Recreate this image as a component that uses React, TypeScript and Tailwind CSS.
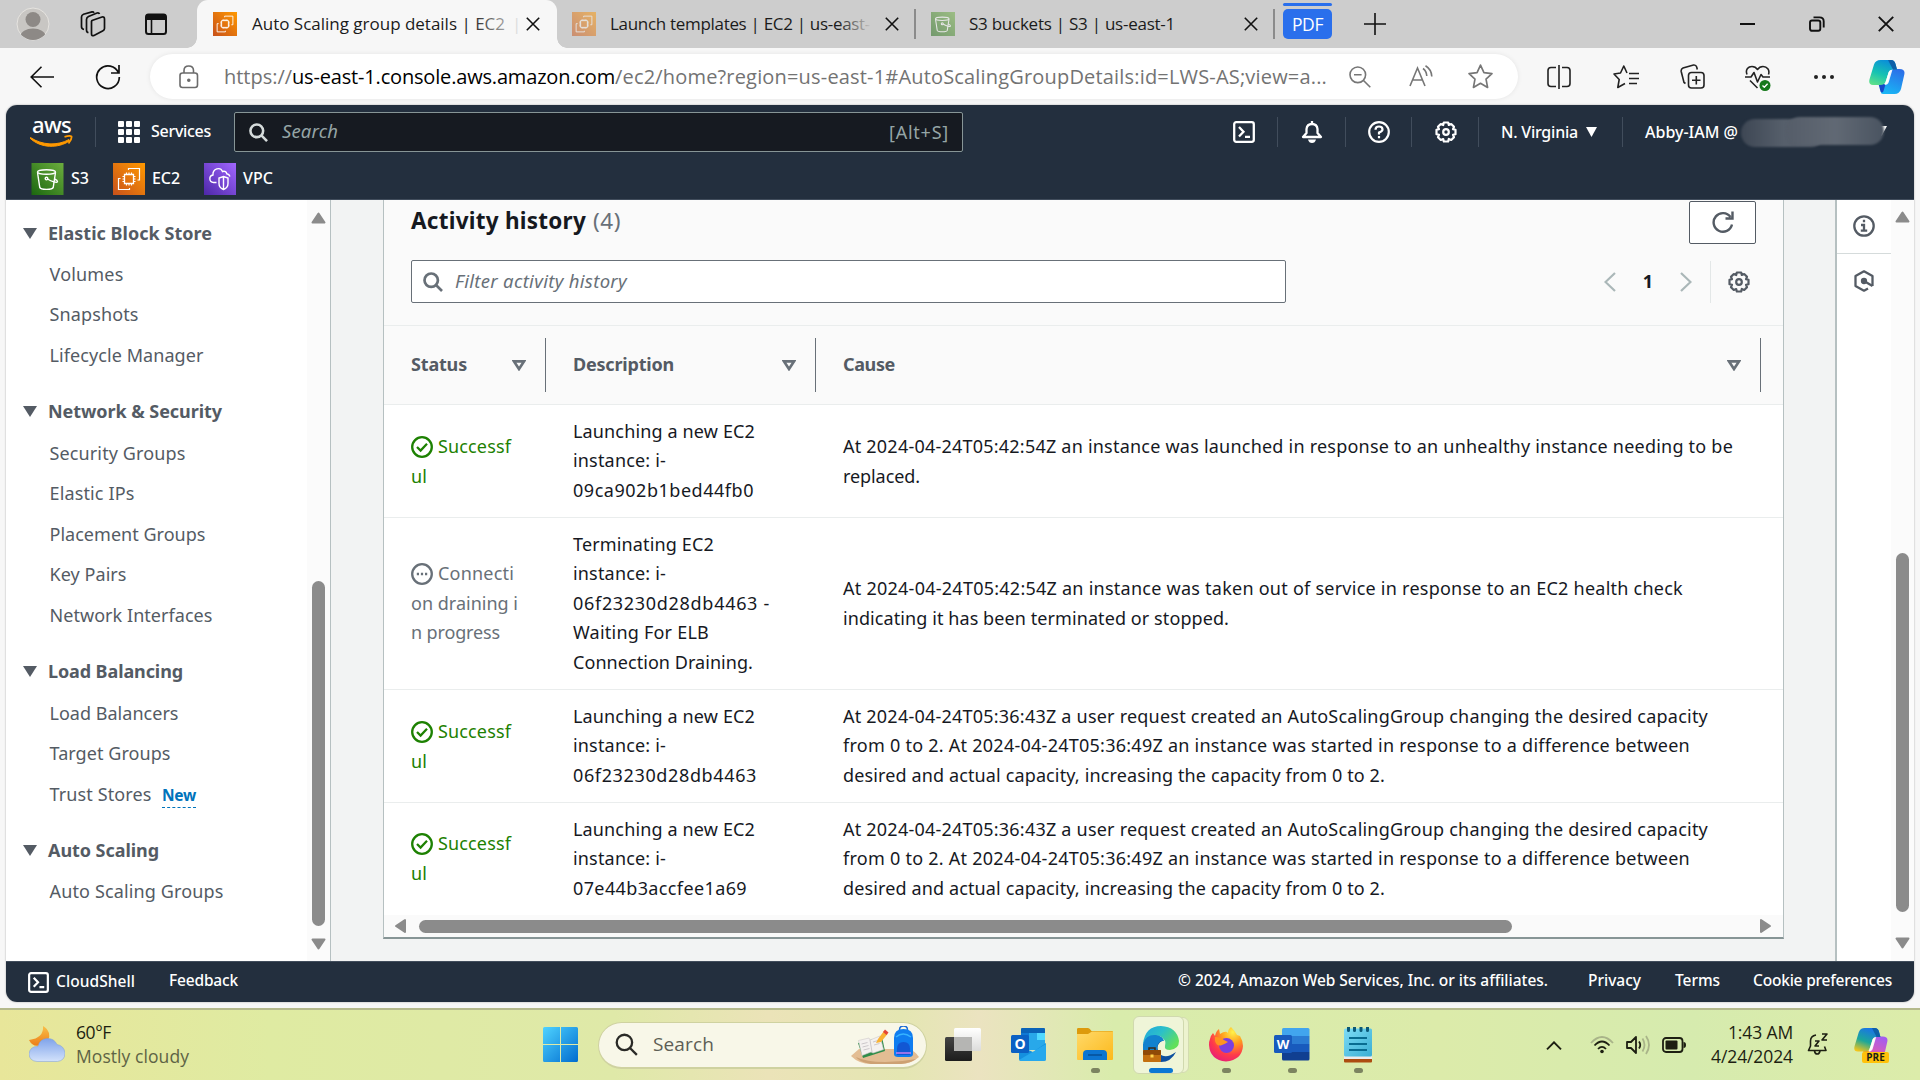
import { useLayoutEffect, useRef, type ReactNode } from "react";

/* Single line of text whose tracking is adjusted so it fills the box given by its classes. */
function Fit({ className = "", children }: { className?: string; children: ReactNode }) {
  const box = useRef<HTMLSpanElement>(null);
  const inner = useRef<HTMLSpanElement>(null);
  useLayoutEffect(() => {
    const b = box.current;
    const i = inner.current;
    if (!b || !i) return;
    i.style.letterSpacing = "0px";
    const n = (i.textContent || "").length;
    i.style.letterSpacing = `${(b.getBoundingClientRect().width - i.getBoundingClientRect().width) / n}px`;
  }, []);
  return (
    <span ref={box} className={`block shrink-0 whitespace-nowrap ${className}`}>
      <span ref={inner}>{children}</span>
    </span>
  );
}

function Ec2Icon({ className = "", id }: { className?: string; id: string }) {
  return (
    <svg viewBox="0 0 32 32" className={className}>
      <defs>
        <linearGradient id={id} x1="0" y1="1" x2="1" y2="0">
          <stop offset="0" stopColor="#c8511b" />
          <stop offset="1" stopColor="#ff9900" />
        </linearGradient>
      </defs>
      <rect width="32" height="32" fill={`url(#${id})`} />
      <g fill="none" stroke="#fff" strokeWidth="1.2">
        <path d="M11.500 20.500V11.500H20.500V20.500Z" strokeWidth="1.300" />
        <path d="M13.500 11.500V9.500M16 11.500V9.500M18.500 11.500V9.500M13.500 22.500V20.500M16 22.500V20.500M18.500 22.500V20.500M11.500 13.500H9.500M11.500 16H9.500M11.500 18.500H9.500M22.500 13.500H20.500M22.500 16H20.500M22.500 18.500H20.500" />
        <path d="M15.500 7V5.500H26.500V17H24.500" />
        <path d="M7.500 15.500H5.500V26.500H16.500V25" />
      </g>
    </svg>
  );
}

function S3Icon({ className = "", id }: { className?: string; id: string }) {
  return (
    <svg viewBox="0 0 32 32" className={className}>
      <defs>
        <linearGradient id={id} x1="0" y1="1" x2="1" y2="0">
          <stop offset="0" stopColor="#1b660f" />
          <stop offset="1" stopColor="#6cae3e" />
        </linearGradient>
      </defs>
      <rect width="32" height="32" fill={`url(#${id})`} />
      <g fill="none" stroke="#fff" strokeWidth="1.400">
        <ellipse cx="15" cy="9" rx="9" ry="2.200" />
        <path d="M6 9.500L8.300 24.500C9 27 21 27 21.700 24.500L24 9.500" />
        <circle cx="15" cy="15.600" r="1.300" />
        <path d="M16 16C20 18.500 26 20.500 26 18.600C26 17.600 24.500 16.700 23 16" />
      </g>
    </svg>
  );
}

function VpcIcon({ className = "" }: { className?: string }) {
  return (
    <svg viewBox="0 0 32 32" className={className}>
      <defs>
        <linearGradient id="vpc" x1="0" y1="1" x2="1" y2="0">
          <stop offset="0" stopColor="#4d27a8" />
          <stop offset="1" stopColor="#a166ff" />
        </linearGradient>
      </defs>
      <rect width="32" height="32" fill="url(#vpc)" />
      <g fill="none" stroke="#fff" strokeWidth="1.400">
        <path d="M12.500 19.500H9.500C5 19 4.500 13 9 12C8.500 5.500 16.500 3.500 18.500 8.500C21 7.500 22.500 9 22.800 10.800C24.500 11 25.500 12 26 13.500" />
        <path d="M19.500 13.500L24 15V20.500C24 23.500 22 25.500 19.500 26.500C17 25.500 15 23.500 15 20.500V15ZM19.500 13.500V26.500" />
      </g>
    </svg>
  );
}

function ShellIcon({ className = "" }: { className?: string }) {
  return (
    <svg viewBox="0 0 22 22" className={`shrink-0 ${className}`} fill="none" stroke="#fff" strokeWidth="2.300">
      <rect x="1.200" y="1.200" width="19.600" height="19.600" rx="2" />
      <path d="M6 6L10.500 10.800L6 15.500M12 15.800H17" />
    </svg>
  );
}

function Gear({ className = "" }: { className?: string }) {
  return (
    <svg viewBox="0 0 22 22" className={`shrink-0 ${className}`} fill="none" stroke="currentColor" strokeWidth="2.200" strokeLinejoin="round">
      <path d="M8.800 1.500H13.200L13.800 4L16.200 3L19 5.800L18 8.200L20.500 8.800V13.200L18 13.800L19 16.200L16.200 19L13.800 18L13.200 20.500H8.800L8.200 18L5.800 19L3 16.200L4 13.800L1.500 13.200V8.800L4 8.200L3 5.800L5.800 3L8.200 4Z" />
      <circle cx="11" cy="11" r="2.800" />
    </svg>
  );
}

function Magnifier({ className = "", w = 2.7 }: { className?: string; w?: number }) {
  return (
    <svg viewBox="0 0 20 20" className={`shrink-0 ${className}`} fill="none" stroke="currentColor" strokeWidth={w}>
      <circle cx="8.200" cy="8.200" r="6.700" />
      <path d="M13 13L19 19" />
    </svg>
  );
}

function Close({ className = "" }: { className?: string }) {
  return (
    <svg viewBox="0 0 14 14" className={`size-[14px] shrink-0 ${className}`} stroke="#111" strokeWidth="1.600">
      <path d="M.8.800L13.200 13.200M13.200.800L.800 13.200" />
    </svg>
  );
}

function Arrow({ dir, className = "" }: { dir: "up" | "down" | "left" | "right"; className?: string }) {
  const rot = { up: "", down: "rotate-180", left: "-rotate-90", right: "rotate-90" }[dir];
  return (
    <svg viewBox="0 0 15 12" className={`h-[12px] w-[15px] shrink-0 ${rot} ${className}`}>
      <path d="M7.500 1.500L13.500 10.500H1.500Z" fill="#8b8b8b" stroke="#8b8b8b" strokeWidth="2" strokeLinejoin="round" />
    </svg>
  );
}

function TabBar() {
  return (
    <div className="flex h-[48px] items-center bg-[#cdcdcd] text-[17px] text-[#1b1b1b]">
      <svg viewBox="0 0 34 34" className="ml-4 size-[34px]">
        <defs>
          <clipPath id="av"><circle cx="17" cy="17" r="16" /></clipPath>
        </defs>
        <circle cx="17" cy="17" r="16" fill="#c8c6c3" stroke="#e6e4e0" />
        <g fill="#8d8986" clipPath="url(#av)">
          <circle cx="17" cy="12.500" r="7.500" />
          <ellipse cx="17" cy="29" rx="12.500" ry="7.500" />
        </g>
      </svg>
      <svg viewBox="0 0 26 26" className="ml-[30px] size-[26px]" fill="none" stroke="#111" strokeWidth="1.700" strokeLinejoin="round">
        <path d="M12 9.500L22 6Q24.500 5.500 24.500 8V17.500Q24.500 19 23 19.700L14 24.500Q11.500 25.300 11.500 23V10.500Z" />
        <path d="M8.500 21.500Q6.500 21.500 6.500 19V8.500Q6.500 6.500 8.500 5.500L17 2Q19 1.500 19.500 3" />
        <path d="M4 18.500Q1.500 18 1.500 15.500V6Q1.500 4 3.500 3.200L12 .9Q13.500.7 14 1.800" />
      </svg>
      <svg viewBox="0 0 22 22" className="ml-[39px] size-[22px]">
        <rect x="1" y="1.500" width="20" height="19.500" rx="2.500" fill="none" stroke="#111" strokeWidth="2" />
        <path d="M1 3Q1 1 3 1H19Q21 1 21 3V7H1Z" fill="#111" />
        <path d="M6.500 6V21" stroke="#111" strokeWidth="1.600" />
      </svg>
      <div className="relative ml-[30px] flex h-full w-[360px] shrink-0 items-center rounded-t-[11px] bg-[#f7f7f7]">
        <span className="absolute bottom-0 -left-[10px] size-[10px] bg-[radial-gradient(circle_at_0_0,#cdcdcd_9.500px,#f7f7f7_10px)]" />
        <span className="absolute -right-[10px] bottom-0 size-[10px] bg-[radial-gradient(circle_at_100%_0,#cdcdcd_9.500px,#f7f7f7_10px)]" />
        <Ec2Icon id="e1" className="ml-[16px] size-[24px]" />
        <div className="relative ml-[15px] flex w-[262px]">
          <Fit className="w-[253px]">Auto Scaling group details | EC2</Fit>
          <span className="ml-[7px] text-[#ddd]">|</span>
          <span className="absolute right-[4px] h-full w-[40px] bg-gradient-to-r from-transparent to-[#f7f7f7]/70" />
        </div>
        <Close className="ml-[12px]" />
      </div>
      <Ec2Icon id="e2" className="ml-[15px] size-[24px] opacity-50" />
      <div className="relative ml-[14px] w-[262px]">
        <Fit className="w-[260px]">Launch templates | EC2 | us-east-</Fit>
        <span className="absolute top-0 right-0 h-full w-[34px] bg-gradient-to-r from-transparent to-[#cdcdcd]" />
      </div>
      <Close className="ml-[13px]" />
      <span className="ml-[15px] h-[30px] w-[2px] bg-[#8b8b8b]" />
      <S3Icon id="s1" className="ml-[15px] size-[24px] opacity-50" />
      <Fit className="ml-[14px] w-[206px]">S3 buckets | S3 | us-east-1</Fit>
      <Close className="ml-[69px]" />
      <span className="ml-[15px] h-[30px] w-[2px] bg-[#8b8b8b]" />
      <div className="ml-[8px] flex h-full w-[49px] shrink-0 flex-col pt-[3px]">
        <span className="h-[3px] rounded-full bg-[#2a6fec]" />
        <div className="mt-[3px] flex h-[30px] items-center justify-center rounded-[5px] bg-[#2a6fec] text-white">
          <Fit className="w-[31px] text-[17.500px]">PDF</Fit>
        </div>
      </div>
      <svg viewBox="0 0 22 22" className="ml-[32px] size-[22px]" stroke="#111" strokeWidth="1.600"><path d="M11 0V22M0 11H22" /></svg>
      <span className="ml-[354px] h-[2px] w-[15px] bg-[#111]" />
      <svg viewBox="0 0 16 16" className="ml-[54px] size-[16px]" fill="none" stroke="#111" strokeWidth="1.900">
        <rect x="1" y="4.500" width="10.300" height="10.300" rx="2" />
        <path d="M4.500 1.400H10.500Q14.700 1.400 14.700 5.500V11.500" />
      </svg>
      <svg viewBox="0 0 16 16" className="ml-[53px] size-[16px]" stroke="#111" strokeWidth="1.900"><path d="M.8.800L15.200 15.200M15.200.800L.800 15.200" /></svg>
    </div>
  );
}

function AddressBar() {
  return (
    <div className="flex h-[57px] items-center bg-[#f7f7f7]">
      <svg viewBox="0 0 24 22" className="ml-[30px] h-[22px] w-[24px]" fill="none" stroke="#111" strokeWidth="1.600"><path d="M11.500.800L1.200 11L11.500 21.200M1.200 11H24" /></svg>
      <svg viewBox="0 0 26 26" className="ml-[41px] size-[26px]" fill="none" stroke="#111" strokeWidth="1.700"><path d="M23.500 9A11.300 11.300 0 1 0 24.300 13M24 1V9H16" /></svg>
      <div className="ml-[29px] flex h-[45px] w-[1368px] items-center rounded-full bg-white shadow-[0_0_5px_rgba(0,0,0,0.08)]">
        <svg viewBox="0 0 20 24" className="ml-[29px] h-[24px] w-[20px]" fill="none" stroke="#6b6b6b" strokeWidth="1.600">
          <rect x="1" y="8" width="17.500" height="14.500" rx="2.500" />
          <path d="M5 8V5.500Q5 1 9.700 1T14.500 5.500V8" />
          <circle cx="9.800" cy="15.200" r="1" fill="#6b6b6b" />
        </svg>
        <div className="ml-[25px] flex text-[20px] text-[#737373]">
          <Fit className="w-[68px]">https://</Fit>
          <Fit className="w-[323px] text-black">us-east-1.console.aws.amazon.com</Fit>
          <Fit className="w-[712px]">/ec2/home?region=us-east-1#AutoScalingGroupDetails:id=LWS-AS;view=a...</Fit>
        </div>
        <svg viewBox="0 0 22 22" className="ml-[22px] size-[22px]" fill="none" stroke="#767676" strokeWidth="1.600"><circle cx="8.800" cy="8.800" r="7.800" /><path d="M14.500 14.500L21.300 21.300M5 8.800H12.600" /></svg>
        <svg viewBox="0 0 24 22" className="mb-[2px] ml-[38px] h-[22px] w-[24px]" fill="none" stroke="#767676" strokeWidth="1.600"><path d="M1 21L8.500 3L16 21M3.600 15H13.400M14 3.500Q17.500 6 17.800 11M16.500.800Q22.500 4.500 22.800 11.500" /></svg>
        <svg viewBox="0 0 24 24" className="ml-[35px] size-[25px]" fill="none" stroke="#767676" strokeWidth="1.600" strokeLinejoin="round"><path d="M12 1L15.300 8.300L23 9.200L17.300 14.500L18.800 22.500L12 18.500L5.200 22.500L6.700 14.500L1 9.200L8.700 8.300Z" /></svg>
      </div>
      <svg viewBox="0 0 24 24" className="ml-[29px] size-[24px]" fill="none" stroke="#222" strokeWidth="1.600"><path d="M12 0V24M9 2.500H4Q1 2.500 1 5.500V18.500Q1 21.500 4 21.500H9M15 2.500H20Q23 2.500 23 5.500V18.500Q23 21.500 20 21.500H15" /></svg>
      <svg viewBox="0 0 26 24" className="ml-[42px] h-[24px] w-[26px]" fill="none" stroke="#222" strokeWidth="1.600" strokeLinejoin="round"><path d="M14 8L10.800 1L7.500 8L1 9L6.200 14.500L4.800 22.500L12 18.500M16 8.500H26M16 13.500H26M16 18.500H24" /></svg>
      <svg viewBox="0 0 25 25" className="ml-[41px] size-[25px]" fill="none" stroke="#222" strokeWidth="1.600">
        <rect x="8.500" y="8.500" width="15.500" height="15.500" rx="3" />
        <path d="M16.300 12V20.500M12 16.300H20.500M5.500 19.500L4 18.500L1.200 7.500Q.8 5 3 4L13.500 1Q16 .700 16.700 3L17.300 5.500" />
      </svg>
      <svg viewBox="0 0 26 26" className="mt-[2px] ml-[40px] size-[26px]" fill="none" stroke="#222" strokeWidth="1.600" strokeLinejoin="round">
        <path d="M2 9.500C0 4 3.500 1.500 7 1.500Q10.500 1.500 12.500 4.500Q14.500 1.500 18 1.500C22 1.500 25 5 23.500 9.500M5 15.500L12.500 23M0 12H6L9 7.500L12.500 17L16 9.500L18 12H25" />
        <circle cx="20" cy="20.500" r="5.500" fill="#16791b" stroke="none" />
        <path d="M17.500 20.500L19.300 22.300L22.600 18.800" stroke="#fff" strokeWidth="1.300" />
      </svg>
      <div className="ml-[43px] flex gap-[4px]">
        <span className="size-[4px] rounded-full bg-[#222]" /><span className="size-[4px] rounded-full bg-[#222]" /><span className="size-[4px] rounded-full bg-[#222]" />
      </div>
      <Copilot id="c1" colors={["#17c3b2", "#0a8ed9", "#2b6fe8", "#19b6f5"]} className="ml-[35px] size-[36px]" />
    </div>
  );
}

function Copilot({ id, colors, className = "" }: { id: string; colors: string[]; className?: string }) {
  return (
    <svg viewBox="0 0 36 34" className={`shrink-0 ${className}`}>
      <defs>
        <linearGradient id={`${id}a`} x1=".6" y1="0" x2=".2" y2="1"><stop offset="0" stopColor={colors[1]} /><stop offset=".55" stopColor={colors[0]} /><stop offset="1" stopColor={id === "c1" ? "#5fe08a" : "#f5c518"} /></linearGradient>
        <linearGradient id={`${id}b`} x1=".7" y1="0" x2=".3" y2="1"><stop offset="0" stopColor={colors[2]} /><stop offset="1" stopColor={colors[3]} /></linearGradient>
      </defs>
      <path d="M22 9H30.500Q36.500 9 35.300 14.500L32 29Q30.500 34 25.500 34H14Q11 34 12 30L13 24.500H15.500Q18.500 24.500 19.300 21Z" fill={`url(#${id}b)`} />
      <path d="M9.500 24H16.500L15 29.500Q14 34 11.500 31.500Z" fill={id === "c1" ? "#1549c9" : "#f5a01b"} />
      <path d="M22 0Q25.500 0 26.500 4L28 9.500H24Q20.500 9.500 19.500 12.500L17 21Q16 25 11 25H4Q-1 25 .600 19L5 4.500Q6.500 0 11.500 0Z" fill={`url(#${id}a)`} />
      <path d="M19 0H22Q25.500 0 26.500 4L28 9.500H24Q21 4 19 0Z" fill="#0d5fa8" />
      <path d="M19.800 12Q21 9.500 23.500 9.500L19.800 22Q19 25 15.500 25Z" fill="#fff" opacity=".9" />
    </svg>
  );
}

const Div = ({ className = "" }: { className?: string }) => <span className={`h-[30px] w-px shrink-0 bg-[#414d5c] ${className}`} />;

function AwsHeader() {
  return (
    <header className="h-[95px] shrink-0 border-b border-[#414d5c] bg-[#232f3e] text-white">
      <div className="flex h-[54px] items-center">
        <div className="ml-[24px] flex w-[43px] flex-col items-center">
          <Fit className="-mt-[5px] h-[22px] w-[39px] text-[22px] leading-[22px] font-medium">aws</Fit>
          <svg viewBox="0 0 43 12" className="h-[12px] w-[43px]">
            <path d="M.500 2.500C12 10.500 28 10.800 39 4.500L39.500 6C28 13.500 11 13.500 0 3.200Z" fill="#f90" stroke="#f90" />
            <path d="M34.500 1.800Q40 .3 41.500 1.500Q42 4.500 38.500 8.500" fill="none" stroke="#f90" strokeWidth="1.800" />
          </svg>
        </div>
        <Div className="ml-[22px]" />
        <div className="ml-[22px] grid grid-cols-3 gap-[2px]">
          {Array.from({ length: 9 }, (_, i) => <span key={i} className="size-[6px] rounded-[1px] bg-white" />)}
        </div>
        <Fit className="-mt-[2px] ml-[11px] w-[60px] text-[16px] font-medium">Services</Fit>
        <div className="ml-[23px] flex h-[40px] w-[729px] shrink-0 items-center rounded-[2px] border border-[#879596] bg-[#161a21] text-[#95a5a6]">
          <Magnifier className="ml-[14px] size-[19px] text-[#d5dbdb]" />
          <Fit className="-mt-[2px] ml-[14px] w-[56px] text-[18.500px] italic">Search</Fit>
          <Fit className="ml-[551px] w-[60px] text-[18px]">[Alt+S]</Fit>
        </div>
        <ShellIcon className="ml-[270px] size-[22px]" />
        <Div className="ml-[22px]" />
        <svg viewBox="0 0 22 22" className="ml-[23px] size-[22px]" fill="none" stroke="#fff" strokeWidth="2.300" strokeLinejoin="round"><path d="M11 0V3M5.500 12V8Q6 3 11 3T16.500 8V12L20 16H2Z" /><path d="M7 18.500H15Q14 22 11 22T7 18.500Z" fill="#fff" stroke="none" /></svg>
        <Div className="ml-[22px]" />
        <svg viewBox="0 0 22 22" className="ml-[22px] size-[22px]" fill="none" stroke="#fff" strokeWidth="2.200"><circle cx="11" cy="11" r="9.800" /><path d="M7.500 8.700Q7.500 5.500 11 5.500T14.500 8.500Q14.500 10.300 11 11.500V13.500M11 15V17.300" /></svg>
        <Div className="ml-[21px]" />
        <Gear className="ml-[23px] size-[22px]" />
        <Div className="ml-[21px]" />
        <Fit className="ml-[22px] w-[77px] text-[16px] font-medium">N. Virginia</Fit>
        <svg viewBox="0 0 11 10" className="ml-[8px] h-[10px] w-[11px] shrink-0"><path d="M0 0H11L5.500 10Z" fill="#fff" /></svg>
        <Div className="ml-[25px]" />
        <Fit className="ml-[22px] w-[93px] text-[16px] font-medium">Abby-IAM @</Fit>
        <div className="relative ml-[3px] h-[32px] w-[146px] shrink-0">
          <svg viewBox="0 0 11 10" className="absolute top-[10px] right-0 h-[10px] w-[11px]"><path d="M0 0H11L5.500 10Z" fill="#fff" /></svg>
          <span className="absolute top-[3px] left-0 h-[28px] w-[84px] rounded-full bg-gradient-to-r from-[#3e4754] via-[#565f6b] to-[#555d69] blur-[1px]" />
          <span className="absolute top-px left-[45px] h-[28px] w-[98px] rounded-full bg-gradient-to-r from-[#555d69] via-[#616974] to-[#4a5461] blur-[1px]" />
        </div>
      </div>
      <div className="flex h-[40px] items-center pb-px text-[16px] font-medium">
        <S3Icon id="s2" className="ml-[25px] h-[32px] w-[33px]" />
        <Fit className="-mt-[2px] ml-[7px] w-[18px]">S3</Fit>
        <Ec2Icon id="e3" className="ml-[24px] size-[32px]" />
        <Fit className="-mt-[2px] ml-[7px] w-[28px]">EC2</Fit>
        <VpcIcon className="ml-[24px] size-[32px]" />
        <Fit className="-mt-[2px] ml-[7px] w-[30px]">VPC</Fit>
      </div>
    </header>
  );
}

function Group({ children, title, className = "" }: { children: ReactNode; title: ReactNode; className?: string }) {
  return (
    <div className={className}>
      <div className="flex h-[42px] items-center">
        <svg viewBox="0 0 14 11" className="ml-[17px] h-[11px] w-[14px]"><path d="M0 0H14L7 11Z" fill="#545b64" /></svg>
        <div className="ml-[11px] text-[18px] font-bold">{title}</div>
      </div>
      {children}
    </div>
  );
}

const Item = ({ className, children }: { className: string; children: ReactNode }) => (
  <div className="flex h-[40.600px] items-center pl-[43.500px]"><Fit className={className}>{children}</Fit></div>
);

function Sidebar() {
  return (
    <nav className="flex w-[325px] shrink-0 border-r-[1.500px] border-[#b6c0c1] bg-white text-[18px] text-[#545b64]">
      <div className="w-[301px] pt-[12px]">
        <Group title={<Fit className="w-[164px]">Elastic Block Store</Fit>}>
          <Item className="w-[74px]">Volumes</Item>
          <Item className="w-[89px]">Snapshots</Item>
          <Item className="w-[154px]">Lifecycle Manager</Item>
        </Group>
        <Group className="mt-[15px]" title={<Fit className="w-[174px]">Network &amp; Security</Fit>}>
          <Item className="w-[136px]">Security Groups</Item>
          <Item className="w-[85px]">Elastic IPs</Item>
          <Item className="w-[156px]">Placement Groups</Item>
          <Item className="w-[77px]">Key Pairs</Item>
          <Item className="w-[163px]">Network Interfaces</Item>
        </Group>
        <Group className="mt-[15px]" title={<Fit className="w-[135px]">Load Balancing</Fit>}>
          <Item className="w-[129px]">Load Balancers</Item>
          <Item className="w-[121px]">Target Groups</Item>
          <div className="flex h-[40.600px] items-center pl-[43.500px]">
            <Fit className="w-[102px]">Trust Stores</Fit>
            <Fit className="mt-[2px] ml-[10.500px] w-[34px] border-b-[1.500px] border-dashed border-[#0073bb] text-[15.500px] leading-[24px] font-bold text-[#0073bb]">New</Fit>
          </div>
        </Group>
        <Group className="mt-[15px]" title={<Fit className="w-[111px]">Auto Scaling</Fit>}>
          <Item className="w-[174px]">Auto Scaling Groups</Item>
        </Group>
      </div>
      <div className="flex w-[23px] flex-col items-center bg-[#fbfbfb]">
        <Arrow dir="up" className="mt-[12px]" />
        <span className="mt-[357px] h-[345px] w-[13px] rounded-full bg-[#8b8b8b]" />
        <Arrow dir="down" className="mt-[12px]" />
      </div>
    </nav>
  );
}

const SortCaret = ({ className = "" }: { className?: string }) => (
  <svg viewBox="0 0 14 11" className={`h-[11px] w-[14px] shrink-0 ${className}`}><path d="M2 1.400H12L7 9Z" fill="none" stroke="#687078" strokeWidth="2.700" /></svg>
);

const StatusIcon = ({ ok }: { ok: boolean }) => (
  <svg viewBox="0 0 22 22" className="size-[22px] shrink-0" fill="none" stroke="currentColor" strokeWidth="2.300">
    <circle cx="11" cy="11" r="9.800" />
    {ok ? <path d="M6 11L9.600 14.500L16 7.800" /> : <path d="M5.800 11H8M9.900 11H12.100M14 11H16.200" />}
  </svg>
);

type Line = [text: string, width: string];
const rows: { ok: boolean; height: string; statusPad: string; causePad: string; status: Line[]; desc: Line[]; cause: Line[] }[] = [
  {
    ok: true, height: "h-[113px]", statusPad: "pt-[2px]", causePad: "pt-[2px]",
    status: [["Successf", "w-[73px]"], ["ul", "w-[16px]"]],
    desc: [["Launching a new EC2", "w-[182px]"], ["instance: i-", "w-[93px]"], ["09ca902b1bed44fb0", "w-[181px]"]],
    cause: [["At 2024-04-24T05:42:54Z an instance was launched in response to an unhealthy instance needing to be", "w-[890px]"], ["replaced.", "w-[77px]"]],
  },
  {
    ok: false, height: "h-[172px]", statusPad: "", causePad: "",
    status: [["Connecti", "w-[76px]"], ["on draining i", "w-[107px]"], ["n progress", "w-[89px]"]],
    desc: [["Terminating EC2", "w-[141px]"], ["instance: i-", "w-[93px]"], ["06f23230d28db4463 -", "w-[197px]"], ["Waiting For ELB", "w-[136px]"], ["Connection Draining.", "w-[180px]"]],
    cause: [["At 2024-04-24T05:42:54Z an instance was taken out of service in response to an EC2 health check", "w-[840px]"], ["indicating it has been terminated or stopped.", "w-[386px]"]],
  },
  {
    ok: true, height: "h-[113px]", statusPad: "pt-[2px]", causePad: "",
    status: [["Successf", "w-[73px]"], ["ul", "w-[16px]"]],
    desc: [["Launching a new EC2", "w-[182px]"], ["instance: i-", "w-[93px]"], ["06f23230d28db4463", "w-[184px]"]],
    cause: [["At 2024-04-24T05:36:43Z a user request created an AutoScalingGroup changing the desired capacity", "w-[865px]"], ["from 0 to 2. At 2024-04-24T05:36:49Z an instance was started in response to a difference between", "w-[847px]"], ["desired and actual capacity, increasing the capacity from 0 to 2.", "w-[542px]"]],
  },
  {
    ok: true, height: "h-[112px]", statusPad: "pb-px", causePad: "",
    status: [["Successf", "w-[73px]"], ["ul", "w-[16px]"]],
    desc: [["Launching a new EC2", "w-[182px]"], ["instance: i-", "w-[93px]"], ["07e44b3accfee1a69", "w-[174px]"]],
    cause: [["At 2024-04-24T05:36:43Z a user request created an AutoScalingGroup changing the desired capacity", "w-[865px]"], ["from 0 to 2. At 2024-04-24T05:36:49Z an instance was started in response to a difference between", "w-[847px]"], ["desired and actual capacity, increasing the capacity from 0 to 2.", "w-[542px]"]],
  },
];

const Lines = ({ lines }: { lines: Line[] }) => (
  <>{lines.map(([t, w]) => <Fit key={t} className={w}>{t}</Fit>)}</>
);

function Panel() {
  return (
    <section className="ml-[52px] flex h-[739px] w-[1401px] shrink-0 flex-col border-x border-b-2 border-x-[#b6c0c1] border-b-[#879596] bg-white">
      <div className="h-[126px] shrink-0 border-b border-[#eaeded] bg-[#fafafa]">
        <div className="flex h-[44px] items-start">
          <Fit className="ml-[27px] w-[175px] text-[22.500px] leading-[42px] font-bold text-[#16191f]">Activity history</Fit>
          <Fit className="ml-[7px] w-[28px] text-[22.500px] leading-[42px] text-[#687078]">(4)</Fit>
          <div className="mt-px ml-[1068px] flex h-[43px] w-[67px] items-center justify-center rounded-[2px] border border-[#545b64] bg-white">
            <svg viewBox="0 0 22 22" className="mb-px size-[22px]" fill="none" stroke="#545b64" strokeWidth="2.400"><path d="M20 13.500A9.300 9.300 0 1 1 18.500 6M20.500.500V7.500H13.500" /></svg>
          </div>
        </div>
        <div className="mt-[16px] flex h-[43px] items-center">
          <div className="ml-[27px] flex h-[43px] w-[875px] items-center rounded-[2px] border border-[#687078] bg-white text-[#687078]">
            <Magnifier className="ml-[11px] size-[20px]" />
            <Fit className="-mt-[2px] ml-[12px] w-[172px] text-[18.500px] italic">Filter activity history</Fit>
          </div>
          <svg viewBox="0 0 12 20" className="ml-[318px] h-[20px] w-[12px]" fill="none" stroke="#aab7b8" strokeWidth="2.200"><path d="M11 1L1.500 10L11 19" /></svg>
          <span className="ml-[26px] w-[12px] text-center text-[18px] font-bold text-[#16191f]">1</span>
          <svg viewBox="0 0 12 20" className="ml-[26px] h-[20px] w-[12px]" fill="none" stroke="#aab7b8" strokeWidth="2.200"><path d="M1 1L10.500 10L1 19" /></svg>
          <span className="ml-[18px] h-[42px] w-px bg-[#e3e7e7]" />
          <Gear className="ml-[17px] size-[22px] text-[#545b64]" />
        </div>
      </div>
      <div className="flex h-[79px] shrink-0 items-center border-b border-[#eaeded] bg-[#fafafa] text-[18px] font-bold text-[#545b64]">
        <Fit className="-mt-[2px] ml-[27px] w-[56px]">Status</Fit>
        <SortCaret className="ml-[45px]" />
        <span className="ml-[19px] h-[54px] w-px bg-[#687078]" />
        <Fit className="-mt-[2px] ml-[27px] w-[101px]">Description</Fit>
        <SortCaret className="ml-[108px]" />
        <span className="ml-[19px] h-[54px] w-px bg-[#687078]" />
        <Fit className="-mt-[2px] ml-[27px] w-[52px]">Cause</Fit>
        <SortCaret className="ml-[832px]" />
        <span className="ml-[19px] h-[54px] w-px bg-[#687078]" />
      </div>
      <div className="flex h-[510px] flex-col text-[18px] leading-[29.600px] text-[#16191f]">
        {rows.map((r, i) => (
          <div key={i} className={`flex shrink-0 items-center border-b border-[#eaeded] last:border-b-0 ${r.height}`}>
            <div className={`ml-[27px] w-[162px] ${r.statusPad} ${r.ok ? "text-[#1d8102]" : "text-[#687078]"}`}>
              <div className="flex items-center gap-[5px]">
                <StatusIcon ok={r.ok} />
                <Lines lines={r.status.slice(0, 1)} />
              </div>
              <Lines lines={r.status.slice(1)} />
            </div>
            <div className="w-[270px]"><Lines lines={r.desc} /></div>
            <div className={r.causePad}><Lines lines={r.cause} /></div>
          </div>
        ))}
      </div>
      <div className="flex flex-1 items-center bg-[#fafafa]">
        <Arrow dir="left" className="ml-[9px]" />
        <span className="ml-[11px] h-[13px] w-[1093px] rounded-full bg-[#8b8b8b]" />
        <Arrow dir="right" className="ml-[246px]" />
      </div>
    </section>
  );
}

function RightRail() {
  return (
    <aside className="ml-[51px] flex flex-1 border-l-2 border-[#b6c0c1] bg-white text-[#545b64]">
      <div className="w-[54px] pr-px">
        <div className="-mr-px flex h-[54px] items-center justify-center border-b border-[#d5dbdb] pr-px pb-[2px]">
          <svg viewBox="0 0 22 22" className="size-[22px]" fill="none" stroke="currentColor" strokeWidth="2.300"><circle cx="11" cy="11" r="9.700" /><path d="M11 4.800V7.200M8 10H11V15.500M7.800 15.700H14.200" /></svg>
        </div>
        <div className="mt-[16px] flex justify-center">
          <svg viewBox="0 0 22 22" className="size-[22px]" fill="none" stroke="currentColor" strokeWidth="2.300" strokeLinejoin="round"><path d="M19.500 16V6L11 1.300L2.500 6V16L11 20.700L15 18.500" /><circle cx="11" cy="11" r="2" fill="currentColor" /><path d="M11 11L19.500 16" /></svg>
        </div>
      </div>
      <div className="flex flex-1 flex-col items-center bg-[#fbfbfb]">
        <Arrow dir="up" className="mt-[11px]" />
        <span className="mt-[330px] h-[359px] w-[13px] rounded-full bg-[#8b8b8b]" />
        <Arrow dir="down" className="mt-[25px]" />
      </div>
    </aside>
  );
}

function AwsFooter() {
  return (
    <footer className="flex h-[41px] shrink-0 items-center border-t border-[#414d5c] bg-[#232f3e] text-[15.500px] font-medium text-white">
      <ShellIcon className="ml-[22px] size-[21px]" />
      <Fit className="ml-[7px] w-[79px]">CloudShell</Fit>
      <div className="mb-[2px] flex">
        <Fit className="ml-[34px] w-[69px]">Feedback</Fit>
        <Fit className="ml-[940px] w-[370px]">© 2024, Amazon Web Services, Inc. or its affiliates.</Fit>
        <Fit className="ml-[40px] w-[53px]">Privacy</Fit>
        <Fit className="ml-[34px] w-[45px]">Terms</Fit>
        <Fit className="ml-[33px] w-[139px]">Cookie preferences</Fit>
      </div>
    </footer>
  );
}

const Dot = () => <span className="h-[5px] w-[9px] rounded-full bg-[#7c8460]" />;

function AppSlot({ className, children, dot }: { className: string; children: ReactNode; dot?: boolean }) {
  return (
    <div className={`flex h-full w-[36px] shrink-0 flex-col items-center pt-[17px] ${className}`}>
      <div className="mb-[5px] size-[36px]">{children}</div>
      {dot && <Dot />}
    </div>
  );
}

function Taskbar() {
  return (
    <div className="flex h-[72px] items-center border-t-2 border-[#b4b98c] bg-[linear-gradient(90deg,#e8e69a_0%,#dfeba2_14%,#dfe9a8_32%,#ebe3b8_40%,#e4e6b2_47%,#ebe3c0_51%,#d9ecac_58%,#dcebaa_75%,#d6ebae_88%,#dcecaa_100%)] font-['Open_Sans',sans-serif]">
      <svg viewBox="0 0 36 36" className="-mt-[2px] ml-[29px] size-[36px]">
        <defs>
          <linearGradient id="moon" x1="0" y1="1" x2="0" y2="0"><stop offset="0" stopColor="#ec7d16" /><stop offset="1" stopColor="#f9c04a" /></linearGradient>
          <linearGradient id="cloud" x1="0" y1="0" x2="0" y2="1"><stop offset="0" stopColor="#7fa3ea" /><stop offset="1" stopColor="#d3e2fb" /></linearGradient>
        </defs>
        <path d="M14 0Q15 12 0 14Q4 22 12 19Q22 15 20 7Q18 2 14 0Z" fill="url(#moon)" />
        <path d="M8 35.500H28.500Q36 34.500 36 27Q35 19.500 28 18.500Q25 12 18 12.500Q10.500 13 9 20.500Q1 20 0 28Q.500 35 8 35.500Z" fill="url(#cloud)" stroke="#7d9cdb" strokeWidth=".5" />
      </svg>
      <div className="-mt-[3px] ml-[11px] text-[17.500px] leading-[24px]">
        <Fit className="w-[35px] text-[#1d1f12]">60°F</Fit>
        <Fit className="w-[113px] text-[#5e6345]">Mostly cloudy</Fit>
      </div>
      <svg viewBox="0 0 35 35" className="-mt-px ml-[354px] size-[35px] shrink-0">
        <defs><linearGradient id="win" gradientUnits="userSpaceOnUse" x1="0" y1="0" x2="35" y2="35"><stop offset="0" stopColor="#4fd3ff" /><stop offset="1" stopColor="#006ccf" /></linearGradient></defs>
        <path d="M1.500 0H17V17H0V1.500Q0 0 1.500 0ZM18 0H33.500Q35 0 35 1.500V17H18ZM0 18H17V35H1.500Q0 35 0 33.500ZM18 18H35V33.500Q35 35 33.500 35H18Z" fill="url(#win)" />
      </svg>
      <div className="ml-[20px] flex h-[47px] w-[329px] shrink-0 items-center rounded-full border border-b-2 border-[#cfd2a0] bg-[#f8f7e8]">
        <Magnifier className="ml-[16px] size-[23px] text-[#2a2a26]" w={2} />
        <Fit className="ml-[15px] w-[61px] text-[19px] text-[#5e5e55]">Search</Fit>
        <svg viewBox="0 0 68 40" className="mt-[2px] ml-[137px] h-[40px] w-[68px] shrink-0">
          <path d="M0 30L8 23H58Q64 25 68 31Q60 38 50 38H20Q8 38 0 30Z" fill="#e3bd93" />
          <path d="M5 31Q8 36 20 38H50Q60 37 65 33Q50 36 34 36Q15 36 5 31Z" fill="#cda173" />
          <path d="M7 17L31 11L34 25L12 32Z" fill="#2f8d4a" />
          <path d="M7.500 14.500L18 12L19 14L29 10L32.500 23.500L22 27L20 26L11 29.500Z" fill="#f4f1ef" stroke="#cfc9c9" strokeWidth=".6" />
          <path d="M19 14L21 26M10.500 18L16.500 16.500M11.500 21L17.500 19.500M12.500 24L18.500 22.500M22 16L27 14.500M23 19L28.500 17.500" stroke="#c2bdc0" strokeWidth=".8" />
          <path d="M25 17L27 13L33 5L36.500 8L30 16Z" fill="#f9b233" />
          <path d="M32 6L34 3.500L37.500 6.500L35.500 9Z" fill="#e44536" />
          <path d="M48.500 4Q48.500 0 52.500 0T56.500 4" fill="none" stroke="#1769d6" strokeWidth="1.500" />
          <path d="M43 12Q43 3 52.500 3T62 12V28Q62 31 58 31H47Q43 31 43 28Z" fill="#0f7df0" />
          <path d="M46 23Q46 16 52.500 16T59 23V29H46Z" fill="#1257d3" />
          <path d="M45 27H60" stroke="#c57df0" strokeWidth="1.500" />
          <path d="M45 11Q52 5 60 11" fill="none" stroke="#36b4ff" strokeWidth="1.500" />
        </svg>
      </div>
      <AppSlot className="ml-[18px]">
        <svg viewBox="0 0 36 36">
          <defs>
            <linearGradient id="tv" x1="0" y1="0" x2="0" y2="1"><stop offset="0" stopColor="#444" /><stop offset="1" stopColor="#1c1c1c" /></linearGradient>
            <linearGradient id="tw" x1="0" y1="0" x2="0" y2="1"><stop offset="0" stopColor="#fff" /><stop offset="1" stopColor="#dcdcda" /></linearGradient>
          </defs>
          <rect y="10" width="27" height="24" rx="1.500" fill="url(#tv)" />
          <rect x="9" y="1" width="27" height="23" rx="1.500" fill="url(#tw)" />
          <rect x="9" y="10" width="18" height="14" fill="#b5b5b3" />
        </svg>
      </AppSlot>
      <AppSlot className="ml-[30px]">
        <svg viewBox="0 0 36 36">
          <rect x="10" y="1" width="24" height="22" rx="1" fill="#0a63b8" />
          <path d="M18 6H34V23H18Z" fill="#28a8ea" /><path d="M26 6H34V13H26Z" fill="#50d9ff" /><path d="M10 6H18V13H10Z" fill="#0f78d4" />
          <path d="M8 19L22 25L35 16V32Q35 34 33 34H10Q8 34 8 32Z" fill="#1490df" /><path d="M8 33L35 17V32Q35 34 33 34H10Z" fill="#2db2f2" opacity=".7" />
          <rect y="8" width="18" height="18" rx="1.500" fill="#0b61c4" />
          <text x="9" y="22" textAnchor="middle" fontFamily="Open Sans" fontWeight="700" fontSize="14" fill="#fff">O</text>
        </svg>
      </AppSlot>
      <AppSlot className="ml-[30px]" dot>
        <svg viewBox="0 0 36 36">
          <defs><linearGradient id="fold" x1="0" y1="0" x2="1" y2="1"><stop offset="0" stopColor="#ffd969" /><stop offset="1" stopColor="#fcb91c" /></linearGradient></defs>
          <path d="M0 2Q0 1 1.500 1H11Q12.500 1 14.500 4H35Q36 4 36 5V12H0Z" fill="#dd9a0c" />
          <path d="M0 7H11L15 4.500H36V32Q36 33 35 33H1Q0 33 0 32Z" fill="url(#fold)" />
          <path d="M6 33V27Q6 23 10 23H26Q30 23 30 27V33Z" fill="#0d75d1" />
          <path d="M11 28H25" stroke="#064f96" strokeWidth="1.500" />
        </svg>
      </AppSlot>
      <div className="relative ml-[20px] flex h-[58px] w-[57px] shrink-0 flex-col items-center">
        <span className="absolute top-px right-px h-[56px] w-[20px] rounded-[6px] border border-[#d3dcb0] bg-[#edf3cf]" />
        <div className="absolute left-0 flex h-[58px] w-[51px] flex-col items-center rounded-[6px] border border-[#d0d9ae] bg-[#eff5d8] pt-[9px] pl-[5px]">
          <svg viewBox="0 0 36 36" className="size-[36px] shrink-0">
            <defs>
              <linearGradient id="ed" x1="0" y1="0" x2="1" y2=".6"><stop offset="0" stopColor="#1fa5e0" /><stop offset=".5" stopColor="#2cc0c8" /><stop offset="1" stopColor="#62e05a" /></linearGradient>
            </defs>
            <path d="M3 27Q-1 14 9 11Q17 9 19 15Q12 19 16 27Q22 34 33 26Q28 36 18 36Q7 35 3 27Z" fill="#0c4f9e" />
            <path d="M0 18Q2 0 18 0Q34 1 36 15Q36 23 27 24Q21 24 22 20Q24 14 17 10Q6 8 0 18Z" fill="url(#ed)" />
            <path d="M0 18Q3 8 13 9Q20 10 21 15Q14 14 14 24H0Z" fill="#1282cf" />
            <rect y="24" width="18" height="12" rx="1" fill="#c3700f" /><rect y="24" width="18" height="5" rx="1" fill="#8f4a07" /><rect x="7.500" y="28.500" width="3" height="3" fill="#ffd34d" />
            <path d="M6 24V22H12V24" fill="none" stroke="#3a2a18" strokeWidth="1.500" />
          </svg>
          <span className="mt-[6px] h-[5px] w-[24px] shrink-0 rounded-full bg-[#0a78d4]" />
        </div>
      </div>
      <AppSlot className="ml-[18px]" dot>
        <svg viewBox="0 0 36 36">
          <defs><radialGradient id="ff" cx=".7" cy=".15" r=".95"><stop offset="0" stopColor="#fff24a" /><stop offset=".35" stopColor="#ff9d1e" /><stop offset=".7" stopColor="#ff3a4a" /><stop offset="1" stopColor="#e51b7d" /></radialGradient></defs>
          <path d="M2 12Q3 8 5 6L7 9Q8 4 11 2L12 7Q18 3 20 6Q20 2 23 0Q27 4 29 8L32 9Q35 14 35 19Q34 33 18 34.500Q2 33 1 18Q1 14 2 12Z" fill="url(#ff)" />
          <circle cx="18.500" cy="18.500" r="7.500" fill="#7a3fe0" />
          <path d="M7 10Q13 10 16 13L20 15Q17 17 14 18Q9 20 7 14Z" fill="#ff9420" />
        </svg>
      </AppSlot>
      <AppSlot className="ml-[30px]" dot>
        <svg viewBox="0 0 36 36">
          <path d="M8 2.500Q8 1 9.500 1H34Q35.500 1 35.500 2.500V9H8Z" fill="#41a5ee" /><path d="M8 9H35.500V17H8Z" fill="#2b7cd3" /><path d="M8 17H35.500V25H8Z" fill="#185abd" /><path d="M8 25H35.500V32Q35.500 33.500 34 33.500H9.500Q8 33.500 8 32Z" fill="#103f91" />
          <rect y="8" width="18" height="18" rx="1.500" fill="#185abd" />
          <text x="9" y="21.500" textAnchor="middle" fontFamily="Open Sans" fontWeight="700" fontSize="13" fill="#fff">W</text>
        </svg>
      </AppSlot>
      <AppSlot className="ml-[30px]" dot>
        <svg viewBox="0 0 36 36">
          <defs><linearGradient id="np" x1="0" y1="0" x2="1" y2="1"><stop offset="0" stopColor="#7ddcf6" /><stop offset="1" stopColor="#3aaed3" /></linearGradient></defs>
          <rect x="4" y="28" width="28" height="7.500" rx="1" fill="#ad4c10" /><rect x="4" y="27" width="28" height="5" fill="#ececec" />
          <rect x="4" y="1.500" width="28" height="28" rx="1.500" fill="url(#np)" />
          <path d="M9 11H27M9 17H27M9 23H27" stroke="#086c91" strokeWidth="2" />
          <path d="M8.500.500V3.500M14.500.500V3.500M21 .500V3.500M27.500.500V3.500" stroke="#0a5877" strokeWidth="3" strokeLinecap="round" />
        </svg>
      </AppSlot>
      <svg viewBox="0 0 16 9" className="ml-[170px] h-[9px] w-[16px]" fill="none" stroke="#1d1f12" strokeWidth="1.900"><path d="M1 8.300L8 1.300L15 8.300" /></svg>
      <svg viewBox="0 0 24 18" className="ml-[28px] h-[18px] w-[24px]" fill="none" stroke="#1d1f12" strokeWidth="1.800">
        <path d="M1 7Q12-5 23 7" stroke="#a9b489" /><path d="M4.500 9.500Q12 1.500 19.500 9.500M8 13Q12 8.800 16 13" /><circle cx="12" cy="15.500" r="1.800" fill="#1d1f12" stroke="none" />
      </svg>
      <svg viewBox="0 0 24 20" className="ml-[12px] h-[20px] w-[24px]" fill="none" stroke="#1d1f12" strokeWidth="1.800" strokeLinejoin="round"><path d="M1 7H5L10 2V18L5 13H1ZM13 6.500Q15.500 10 13 13.500" /><path d="M16.500 3.500Q20.500 10 16.500 16.500M20 1Q26 10 20 19" stroke="#a9b489" /></svg>
      <svg viewBox="0 0 24 16" className="ml-[12px] h-[16px] w-[24px]"><rect x="1" y="1" width="19.500" height="14" rx="3" fill="none" stroke="#1d1f12" strokeWidth="1.800" /><rect x="3.500" y="3.500" width="12" height="9" rx="1" fill="#1d1f12" /><path d="M21.500 5Q24 5 24 8T21.500 11Z" fill="#1d1f12" /></svg>
      <div className="-mt-[3px] ml-[25px] flex w-[82px] flex-col items-end text-[17.500px] leading-[24px] text-[#1d1f12]">
        <Fit className="w-[65px]">1:43 AM</Fit>
        <Fit className="w-[82px]">4/24/2024</Fit>
      </div>
      <svg viewBox="0 0 22 22" className="-mt-[2px] ml-[14px] size-[22px]" fill="none" stroke="#1d1f12" strokeWidth="1.600" strokeLinejoin="round"><path d="M9 2Q3.500 3 3.500 8V13L1.500 17.500H19L17.500 13.500M7.500 18Q8 21 10.200 21T13 18M8 8H12L8 13H12M15 1H20L15 7H20" /></svg>
      <div className="relative ml-[25px] size-[35px] shrink-0">
        <Copilot id="c2" colors={["#1ba79a", "#1a73e8", "#a25cf0", "#f25ca0"]} className="h-[32px] w-[34px]" />
        <span className="absolute right-0 bottom-0 flex h-[11px] w-[27px] items-center justify-center rounded-[2px] bg-[#ffc20a] text-[10px] font-bold text-[#1d1f12]">PRE</span>
      </div>
    </div>
  );
}

export default function App() {
  return (
    <div className="flex h-[1080px] w-[1920px] flex-col overflow-hidden bg-[#f7f7f7] font-['Open_Sans',sans-serif]">
      <TabBar />
      <AddressBar />
      <div className="mx-[6px] mb-[6px] flex h-[897px] flex-col overflow-hidden rounded-[11px] bg-[#f2f3f3] font-['Noto_Sans',sans-serif] shadow-[0_0_2px_rgba(0,0,0,0.35)]">
        <AwsHeader />
        <div className="flex h-[761px] shrink-0">
          <Sidebar />
          <Panel />
          <RightRail />
        </div>
        <AwsFooter />
      </div>
      <Taskbar />
    </div>
  );
}
